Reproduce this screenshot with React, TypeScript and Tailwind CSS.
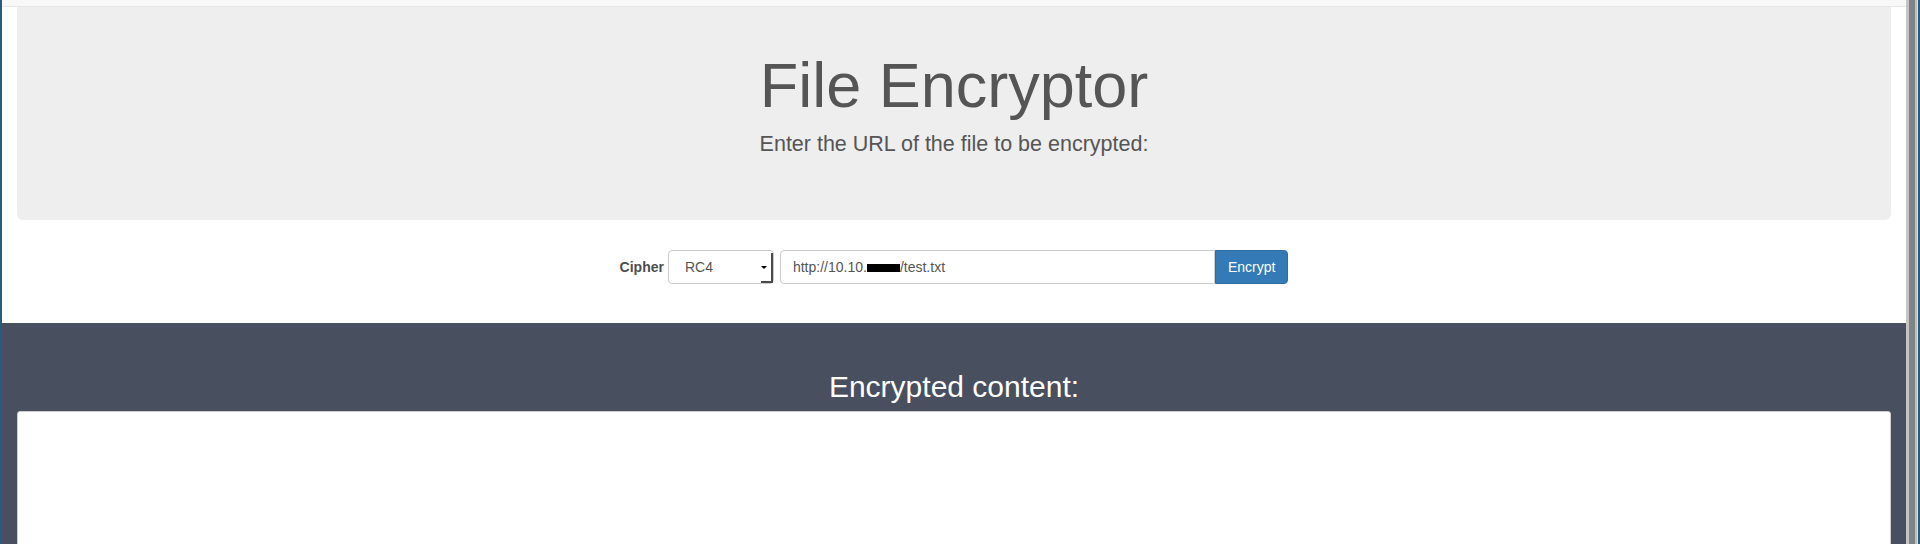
import React, { useState } from 'react';

const font = { fontFamily: '"Liberation Sans", Arial, Helvetica, sans-serif' };

function CipherSelect({ value }: { value: string }) {
  return (
    <div className="flex items-stretch w-[106px] h-[34px] border border-[#ccc] rounded-[4px] bg-white">
      <span className="flex-1 flex items-center pl-[16px] text-[14px] text-[#555]">{value}</span>
      <div className="w-[12px] mt-[2px] border-r-[2px] border-b-[2px] border-[#4a4a4a] flex items-center">
        <span className="w-0 h-0 border-l-[3px] border-r-[3px] border-t-[3px] border-l-transparent border-r-transparent border-t-black" />
      </div>
    </div>
  );
}

export default function App() {
  const [cipher] = useState('RC4');

  return (
    <div className="flex w-full h-[544px] overflow-hidden bg-white" style={font}>
      {/* window frame, left */}
      <div className="w-[2px] shrink-0 bg-[#2b5a7f]" />

      <div className="flex-1 flex flex-col min-w-0">
        {/* navbar, mostly scrolled away */}
        <div className="h-[7px] shrink-0 bg-[#f8f8f8] border-b border-[#e7e7e7]" />

        <div className="px-[15px] shrink-0">
          <div className="bg-[#eee] rounded-b-[6px] pt-[44px] pb-[46px] text-center text-[#555]">
            <h1 className="text-[63px] leading-[69px] mb-[10px]">File Encryptor</h1>
            <p className="text-[21.5px] leading-[29px] mb-[15px]">Enter the URL of the file to be encrypted:</p>
          </div>
        </div>

        <form className="mt-[30px] shrink-0 flex justify-center items-center h-[34px]" onSubmit={e => e.preventDefault()}>
          <label className="font-bold text-[14px] text-[#4d4d4d] mr-[4px]">Cipher</label>
          <CipherSelect value={cipher} />
          <div className="flex ml-[6px]">
            <div className="w-[435px] h-[34px] border border-[#ccc] rounded-l-[4px] flex items-center pl-[12px] text-[14px] text-[#555]">
              <span>http://10.10.</span>
              <span className="inline-block w-[33px] h-[8px] bg-black mt-[1px]" />
              <span>/test.txt</span>
            </div>
            <button className="h-[34px] px-[12px] bg-[#337ab7] border border-[#2e6da4] rounded-r-[4px] text-white text-[14px]">
              Encrypt
            </button>
          </div>
        </form>

        <div className="mt-[39px] flex-1 shrink-0 bg-[#484f5e] pt-[47px] px-[15px]">
          <h2 className="text-center text-white text-[30px] leading-[33px] mb-[8px]">Encrypted content:</h2>
          <div className="h-[200px] bg-white border border-[#ccc] rounded-[3px]" />
        </div>
      </div>

      {/* window frame, right */}
      <div className="w-[3px] shrink-0 bg-[#c6c4c2]" />
      <div className="w-[6px] shrink-0 bg-[#7f8484]" />
      <div className="w-[2px] shrink-0 bg-[#bdbdbd]" />
      <div className="w-[1px] shrink-0 bg-[#dcdcdc]" />
      <div className="w-[2px] shrink-0 bg-[#2b5a7f]" />
    </div>
  );
}
